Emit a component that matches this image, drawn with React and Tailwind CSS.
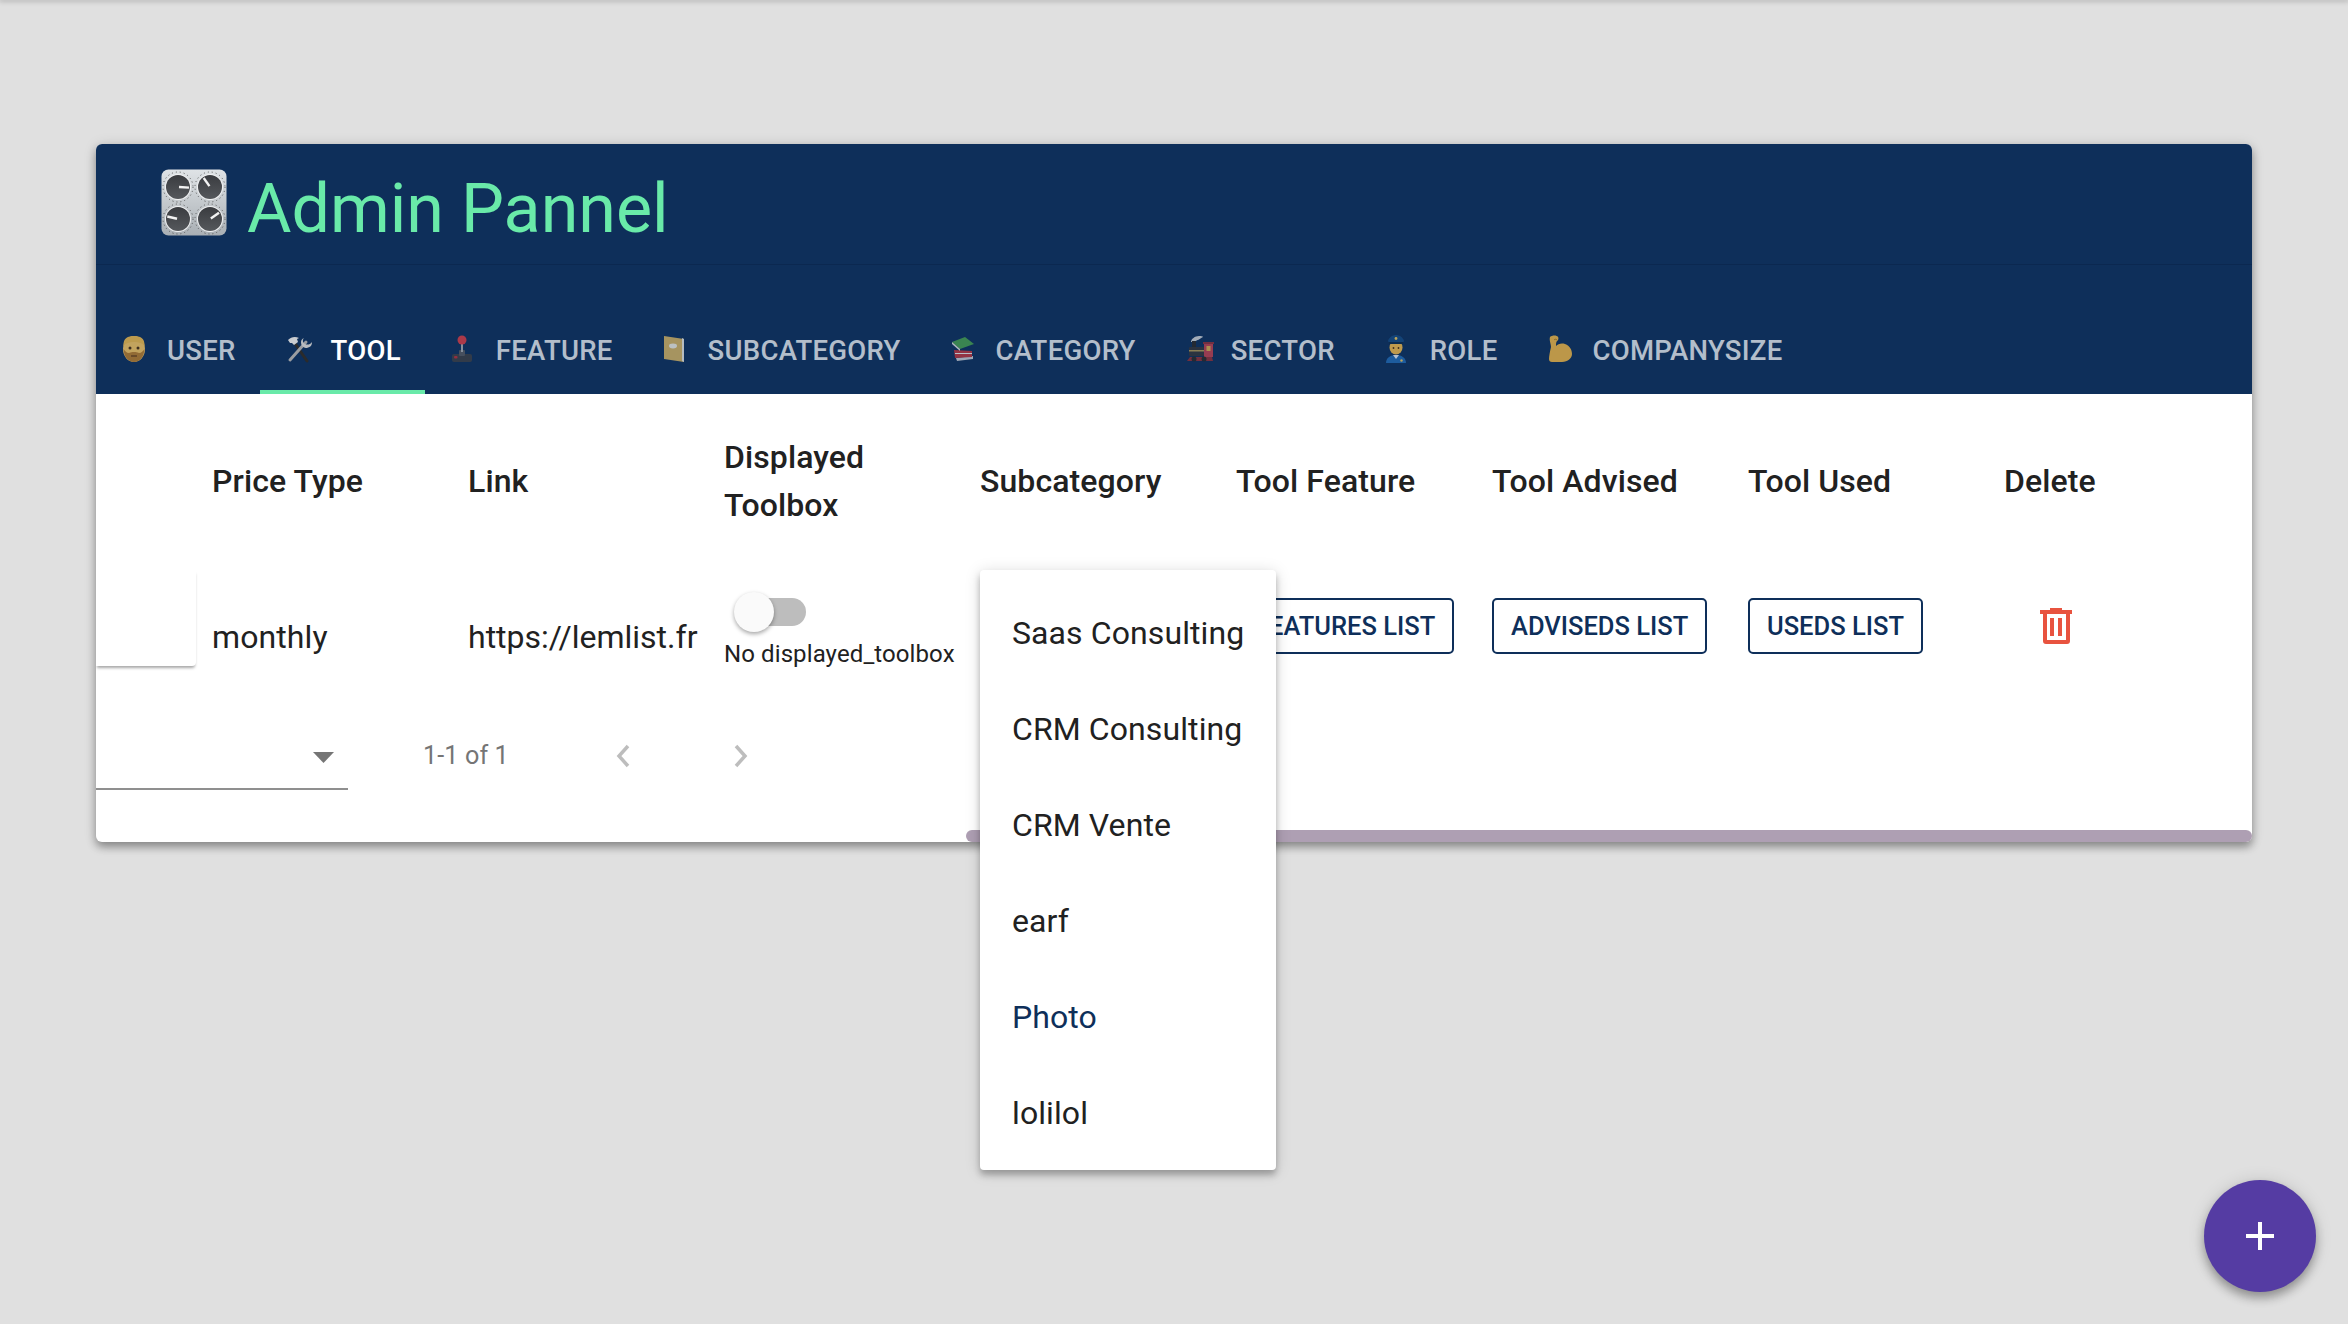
const LogoIcon = () => {
  const knobs = [
    { x: 17, y: 18, a: 3 },
    { x: 49, y: 18, a: 235 },
    { x: 17, y: 50, a: 193 },
    { x: 49, y: 50, a: -35 },
  ];
  return (
    <svg width="66" height="67" viewBox="0 0 66 67" className="shrink-0">
      <defs>
        <linearGradient id="plate" x1="0" y1="0" x2="0" y2="1">
          <stop offset="0" stopColor="#dfe3e6" />
          <stop offset="1" stopColor="#a9afb4" />
        </linearGradient>
        <linearGradient id="knob" x1="0" y1="0" x2="0" y2="1">
          <stop offset="0" stopColor="#3a3c40" />
          <stop offset="1" stopColor="#55585c" />
        </linearGradient>
      </defs>
      <rect x="0.5" y="0.5" width="65" height="66" rx="7" fill="url(#plate)" />
      {knobs.map((k) => (
        <g key={k.x + "-" + k.y}>
          <circle cx={k.x} cy={k.y} r="15" fill="none" stroke="#555" strokeWidth="1" strokeDasharray="1 3" />
          <circle cx={k.x} cy={k.y} r="13" fill="#f1f2f3" />
          <circle cx={k.x} cy={k.y} r="12" fill="url(#knob)" />
          <line
            x1={k.x + 1}
            y1={k.y}
            x2={k.x + 11}
            y2={k.y}
            stroke="#f2f2f2"
            strokeWidth="2.4"
            transform={`rotate(${k.a} ${k.x} ${k.y})`}
          />
        </g>
      ))}
    </svg>
  );
};

const ManIcon = () => (
  <svg width="24" height="28" viewBox="0 0 24 28">
    <ellipse cx="12" cy="14" rx="11" ry="13" fill="#f0c060" />
    <path d="M1.500 11C1 3 6 1 12 1s11 2 10.500 10C20 8 17 7 12 7S4 8 1.500 11z" fill="#e8b64c" />
    <path d="M1.500 14c.5 8 5 13 10.500 13s10-5 10.500-13c-1.500 2-3 4-5.500 4-2-1-3-1-5-1s-3 0-5 1c-2.500 0-4-2-5.500-4z" fill="#b47a2c" />
    <circle cx="8" cy="13" r="1.500" fill="#4b2f12" />
    <circle cx="16" cy="13" r="1.500" fill="#4b2f12" />
    <path d="M9 21h6" stroke="#6d4318" strokeWidth="1.400" />
  </svg>
);

const ToolsIcon = () => (
  <svg width="28" height="28" viewBox="0 0 28 28">
    <path d="M9 7l13 19" stroke="#2b2b2b" strokeWidth="3" strokeLinecap="round" />
    <path d="M3 5c3-3 7-4 11-2l-2 1 1 3-4 3-2-2-2 0z" fill="#c9ccd0" />
    <path d="M21 7L5 25" stroke="#9a9da1" strokeWidth="3" strokeLinecap="round" />
    <path d="M19 3c-2 2-1 5 1 6 2 1 5 1 7-2 0 4-2 5-5 6-3 0-6-2-6-6 0-2 1-3 3-4z" fill="#b9bcc0" />
  </svg>
);

const JoystickIcon = () => (
  <svg width="22" height="28" viewBox="0 0 22 28">
    <rect x="1" y="19" width="20" height="8" rx="2" fill="#3b3f46" />
    <rect x="8" y="15" width="6" height="6" rx="1" fill="#55585f" />
    <rect x="10" y="8" width="2" height="9" fill="#a3a6ab" />
    <circle cx="11" cy="5" r="4.500" fill="#d23c46" />
    <rect x="3" y="21" width="3.500" height="2.500" rx="1" fill="#b3303a" />
  </svg>
);

const NotebookIcon = () => (
  <svg width="22" height="28" viewBox="0 0 22 28">
    <path d="M1 1l20 3v23L1 24z" fill="#cdae62" />
    <path d="M19 3l2 1v23l-2-1z" fill="#dfe0dc" />
    <ellipse cx="10" cy="11" rx="4" ry="2.400" fill="#e8e6dc" />
  </svg>
);

const BooksIcon = () => (
  <svg width="24" height="26" viewBox="0 0 24 26">
    <path d="M5 22l17-2v3L6 25z" fill="#c3c6cc" />
    <path d="M3 14l18 1v6L4 22z" fill="#b5343e" />
    <path d="M4 17l17 0v1H4z" fill="#e3e3e3" />
    <path d="M1 6l13-5 9 7-14 5z" fill="#459a50" />
    <path d="M1 6l8 7v2L1 8z" fill="#d8dbd8" />
  </svg>
);

const TrainIcon = () => (
  <svg width="28" height="28" viewBox="0 0 28 28">
    <path d="M5 7c0-3 4-6 8-6 2 0 4 0 4 1-2 1-3 2-5 3-2 0-2 2-3 2z" fill="#c8ccd0" />
    <rect x="6" y="6" width="4" height="6" fill="#2a2a2a" />
    <rect x="3" y="12" width="15" height="9" rx="1" fill="#33353a" />
    <rect x="3" y="15" width="15" height="1.500" fill="#a89254" />
    <rect x="18" y="9" width="9" height="13" fill="#b8404f" />
    <rect x="17" y="7" width="11" height="2" fill="#8c2f3c" />
    <rect x="20.500" y="11" width="4" height="5" fill="#d4a94f" />
    <path d="M1 26l3-4h22l1 4z" fill="#8c2f38" />
    <circle cx="8" cy="24" r="2.500" fill="#292929" />
    <circle cx="18" cy="24" r="2.500" fill="#292929" />
  </svg>
);

const PoliceIcon = () => (
  <svg width="22" height="28" viewBox="0 0 22 28">
    <path d="M1 28c0-5 4-8 10-8s10 3 10 8z" fill="#2168b0" />
    <path d="M8 20l3 4 3-4z" fill="#dfe6ee" />
    <ellipse cx="11" cy="12.500" rx="6.500" ry="7" fill="#eab54a" />
    <path d="M3 6c1-4 5-6 8-6s7 2 8 6c-1 2-3 2-8 2S4 8 3 6z" fill="#15497f" />
    <rect x="4" y="7" width="14" height="2" fill="#0c2c4e" />
    <circle cx="11" cy="3.500" r="1.400" fill="#e5c05b" />
    <circle cx="8.500" cy="13" r="0.900" fill="#4b2f12" />
    <circle cx="13.500" cy="13" r="0.900" fill="#4b2f12" />
    <circle cx="16.500" cy="25.500" r="1.200" fill="#e5c05b" />
  </svg>
);

const MuscleIcon = () => (
  <svg width="26" height="28" viewBox="0 0 26 28">
    <path d="M3 2c2-2 7-2 8 0 1 1 0 4-1 4-1 1-1 3-1 5 2-2 5-3 9-2 5 2 7 6 7 10 0 4-4 8-10 8H5c-2 0-3-1-3-3 0-3 1-8 2-12 0-3-2-7-1-10z" fill="#e8b246" />
    <path d="M7 5c1-1 2-1 3 0" stroke="#a37520" strokeWidth="1" fill="none" />
  </svg>
);

const tabs = [
  { label: "USER", icon: <ManIcon /> },
  { label: "TOOL", icon: <ToolsIcon />, active: true },
  { label: "FEATURE", icon: <JoystickIcon /> },
  { label: "SUBCATEGORY", icon: <NotebookIcon /> },
  { label: "CATEGORY", icon: <BooksIcon /> },
  { label: "SECTOR", icon: <TrainIcon /> },
  { label: "ROLE", icon: <PoliceIcon /> },
  { label: "COMPANYSIZE", icon: <MuscleIcon /> },
];

const columns = ["Price Type", "Link", "Displayed Toolbox", "Subcategory", "Tool Feature", "Tool Advised", "Tool Used", "Delete"];

const subcategories = ["Saas Consulting", "CRM Consulting", "CRM Vente", "earf", "Photo", "lolilol"];

const ListButton = ({ children }) => (
  <button className="h-[56px] px-[17px] border-2 border-[#0e2f5a] rounded-[5px] text-[#0e2f5a] text-[25.5px] font-medium tracking-normal whitespace-nowrap">
    {children}
  </button>
);

const TrashIcon = () => (
  <svg width="32" height="36" viewBox="0 0 32 36">
    <path d="M10 0h12v2h10v4H0V2h10z" fill="#e8533f" />
    <path d="M3 6h27v27a3 3 0 0 1-3 3H6a3 3 0 0 1-3-3zm4 0v26h19V6z" fill="#e8533f" fillRule="evenodd" />
    <rect x="10" y="10" width="4" height="18" fill="#e8533f" />
    <rect x="18" y="10" width="4" height="18" fill="#e8533f" />
  </svg>
);

const App = () => {
  return (
    <div className="relative min-h-[1324px] bg-[#e0e0e0] pt-[144px] px-[96px] font-['Roboto',sans-serif] overflow-hidden">
      {/* thin bar shadow at the top */}
      <div className="absolute top-0 left-0 right-0 h-0 shadow-[0_0_5px_1px_rgba(0,0,0,0.35)]" />

      <div className="relative h-[698px] bg-white rounded-[6px] shadow-[0_5px_8px_rgba(0,0,0,0.35),0_1px_14px_rgba(0,0,0,0.12)]">
        {/* Header */}
        <div className="bg-[#0e2f5a] rounded-t-[6px]">
          <div className="h-[121px] flex items-start pt-[25px] pl-[65px] border-b border-[#0b2850]">
            <LogoIcon />
            <h1 className="ml-[20px] mt-[2px] text-[#69eaa9] text-[68.2px] leading-[76px] font-normal whitespace-nowrap">Admin Pannel</h1>
          </div>
          <div className="h-[129px] flex items-end">
            {tabs.map((tab) => (
              <div key={tab.label} className="relative h-[96px] px-[24px] pt-[9px] flex items-center">
                <div className="flex items-center">
                  <div className={tab.active ? "w-[47px] h-[28px] -mt-[4px] pl-[1px] flex items-center" : "w-[47px] h-[28px] -mt-[4px] pl-[2px] flex items-center opacity-80"}>{tab.icon}</div>
                  <span className={tab.active ? "text-white text-[27.5px] font-medium tracking-[0.01em] whitespace-nowrap" : "text-white/70 text-[27.5px] font-medium tracking-[0.01em] whitespace-nowrap"}>{tab.label}</span>
                </div>
                {tab.active && <div className="absolute left-0 right-0 bottom-0 h-[4px] bg-[#69eaa9]" />}
              </div>
            ))}
          </div>
        </div>

        {/* Table */}
        <div className="overflow-hidden text-[#212121] tracking-[0.1px]">
          <div className="flex h-[174px] items-center pl-[116px]">
            {columns.map((col) => (
              <div key={col} className="w-[256px] shrink-0 pr-[24px] text-[32px] leading-[48px] font-medium">
                {col}
              </div>
            ))}
          </div>

          <div className="flex h-[142px]">
            <div className="w-[100px] shrink-0 h-[96px] mt-[2px] mr-[16px] bg-white rounded-br-[4px] shadow-[0_3px_3px_-1px_rgba(0,0,0,0.35)]" />
            <div className="w-[256px] shrink-0 pt-[51px] text-[32px] leading-[36px]">monthly</div>
            <div className="w-[256px] shrink-0 pt-[51px] text-[32px] leading-[36px] tracking-normal whitespace-nowrap">https://lemlist.fr</div>
            <div className="w-[256px] shrink-0 pt-[24px]">
              <div className="relative ml-[10px] w-[72px] h-[40px] flex items-center">
                <div className="ml-[16px] w-[56px] h-[28px] rounded-full bg-[#bdbdbd]" />
                <div className="absolute left-0 top-0 w-[40px] h-[40px] rounded-full bg-[#fafafa] shadow-[0_2px_4px_rgba(0,0,0,0.35)]" />
              </div>
              <div className="mt-[8px] text-[24px] leading-[28px] whitespace-nowrap">No displayed_toolbox</div>
            </div>
            <div className="w-[256px] shrink-0" />
            <div className="w-[256px] shrink-0 pt-[30px]">
              <ListButton>FEATURES LIST</ListButton>
            </div>
            <div className="w-[256px] shrink-0 pt-[30px]">
              <ListButton>ADVISEDS LIST</ListButton>
            </div>
            <div className="w-[256px] shrink-0 pt-[30px]">
              <ListButton>USEDS LIST</ListButton>
            </div>
            <div className="shrink-0 pt-[40px] pl-[36px]">
              <TrashIcon />
            </div>
          </div>

          {/* Pagination */}
          <div className="flex h-[132px] items-start">
            <div className="w-[252px] h-[80px] border-b-2 border-[#8f8f8f] flex justify-end pt-[42px] pr-[14px]">
              <svg width="21" height="11" viewBox="0 0 21 11">
                <path d="M0 0h21L10.500 11z" fill="#757575" />
              </svg>
            </div>
            <div className="ml-[75px] w-[193px] mt-[32px] text-[25.2px] leading-[28px] text-[#757575]">1-1 of 1</div>
            <svg width="22" height="26" viewBox="0 0 22 26" className="ml-[-4px] mt-[33px]">
              <path d="M16 3L7 13l9 10" stroke="#bdbdbd" strokeWidth="3.500" fill="none" />
            </svg>
            <svg width="22" height="26" viewBox="0 0 22 26" className="ml-[96px] mt-[33px]">
              <path d="M6 3l9 10-9 10" stroke="#bdbdbd" strokeWidth="3.500" fill="none" />
            </svg>
          </div>
        </div>

        {/* Scrollbar thumb */}
        <div className="absolute left-[870px] right-0 bottom-0 h-[12px] rounded-full bg-[#ae9fb3]" />

        {/* Subcategory menu */}
        <div className="absolute left-[884px] top-[426px] w-[296px] pt-[15px] pb-[9px] bg-white rounded-[4px] tracking-[0.1px] shadow-[0_5px_6px_rgba(0,0,0,0.25),0_2px_16px_rgba(0,0,0,0.15)]">
          {subcategories.map((item) => (
            <div
              key={item}
              className={item === "Photo" ? "h-[96px] pl-[32px] flex items-center text-[32px] text-[#0e2f5a]" : "h-[96px] pl-[32px] flex items-center text-[32px] text-[#212121]"}
            >
              {item}
            </div>
          ))}
        </div>
      </div>

      {/* Add button */}
      <button className="absolute left-[2204px] top-[1180px] w-[112px] h-[112px] rounded-full bg-[#553ca3] flex items-center justify-center shadow-[0_6px_10px_rgba(0,0,0,0.3),0_1px_18px_rgba(0,0,0,0.12)]">
        <svg width="28" height="28" viewBox="0 0 28 28">
          <path d="M12 0h4v12h12v4H16v12h-4V16H0v-4h12z" fill="#fff" />
        </svg>
      </button>
    </div>
  );
};

export default App;
